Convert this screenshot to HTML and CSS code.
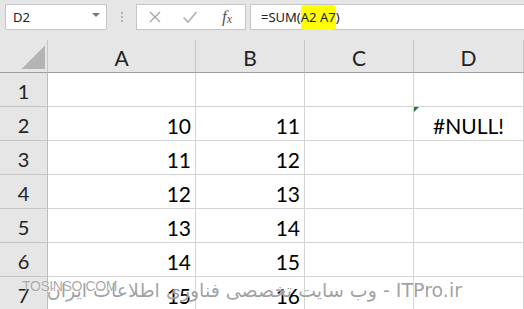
FILE: index.html
```html
<!DOCTYPE html>
<html lang="en">
<head>
    <meta charset="UTF-8">
    <title>SUM #NULL!</title>
    <link rel="stylesheet" href="styles.css">
</head>
<body>
    <div class="toolbar">
        <div class="name-box">
            <span>D2</span>
            <span class="drop"></span>
        </div>
        <div class="grip"><i></i><i></i><i></i></div>
        <div class="fx-buttons">
            <svg class="btn" width="14" height="14" viewBox="0 0 14 14">
                <path d="M2 2 L12 12 M12 2 L2 12" stroke="#a8a8a8" stroke-width="1.4" fill="none"/>
            </svg>
            <svg class="btn" width="16" height="14" viewBox="0 0 16 14">
                <path d="M1.5 7.5 L6 12 L14.5 2" stroke="#b0b0b0" stroke-width="1.6" fill="none"/>
            </svg>
            <span class="fx">f<sub>x</sub></span>
        </div>
        <div class="formula">=SUM(<span class="hl">A2 A7</span>)</div>
    </div>

    <div class="sheet">
        <div class="corner"></div>
        <div class="col-head">A</div>
        <div class="col-head">B</div>
        <div class="col-head">C</div>
        <div class="col-head">D</div>

        <div class="row-head">1</div>
        <div class="cell"></div>
        <div class="cell"></div>
        <div class="cell"></div>
        <div class="cell"></div>

        <div class="row-head">2</div>
        <div class="cell num">10</div>
        <div class="cell num">11</div>
        <div class="cell"></div>
        <div class="cell error">#NULL!</div>

        <div class="row-head">3</div>
        <div class="cell num">11</div>
        <div class="cell num">12</div>
        <div class="cell"></div>
        <div class="cell"></div>

        <div class="row-head">4</div>
        <div class="cell num">12</div>
        <div class="cell num">13</div>
        <div class="cell"></div>
        <div class="cell"></div>

        <div class="row-head">5</div>
        <div class="cell num">13</div>
        <div class="cell num">14</div>
        <div class="cell"></div>
        <div class="cell"></div>

        <div class="row-head">6</div>
        <div class="cell num">14</div>
        <div class="cell num">15</div>
        <div class="cell"></div>
        <div class="cell"></div>

        <div class="row-head">7</div>
        <div class="cell num">15</div>
        <div class="cell num">16</div>
        <div class="cell"></div>
        <div class="cell"></div>
    </div>

    <div class="mark-site">TOSINSO.COM</div>
    <div class="mark-itpro" dir="rtl">ITPro.ir - وب سایت تخصصی فناوری اطلاعات ایران</div>
</body>
</html>
```

FILE: styles.css
```css
body {
    margin: 0;
    background: #fff;
    font-family: Lato, "Open Sans", sans-serif;
    color: #000;
    overflow: hidden;
    position: relative;
    height: 309px;
}

.toolbar {
    display: flex;
    align-items: flex-start;
    height: 40px;
    padding: 4px 0 0 5px;
    box-sizing: border-box;
    background: #e6e6e6;
}

.name-box {
    display: flex;
    align-items: center;
    justify-content: space-between;
    width: 102px;
    height: 26px;
    box-sizing: border-box;
    padding: 0 6px 0 7px;
    background: #fff;
    border: 1px solid #c6c6c6;
    font-family: "Noto Sans", sans-serif;
    font-size: 13px;
    color: #222;
}

.drop {
    width: 0;
    height: 0;
    border-left: 4px solid transparent;
    border-right: 4px solid transparent;
    border-top: 4px solid #777;
    margin-top: -4px;
}

.grip {
    display: flex;
    flex-direction: column;
    gap: 2px;
    margin: 8px 13px 0 14px;
}

.grip i {
    display: block;
    width: 2px;
    height: 2px;
    background: #b4b4b4;
}

.fx-buttons {
    display: flex;
    align-items: center;
    width: 110px;
    height: 26px;
    box-sizing: border-box;
    padding-left: 11px;
    background: #fff;
    border: 1px solid #c6c6c6;
}

.fx-buttons .btn + .btn {
    margin-left: 20px;
}

.fx {
    margin-left: 24px;
    font-family: "Liberation Serif", serif;
    font-style: italic;
    font-size: 17px;
    color: #555;
}

.fx sub {
    font-size: 12px;
    vertical-align: -1px;
}

.formula {
    flex: 1;
    display: flex;
    align-items: center;
    height: 26px;
    box-sizing: border-box;
    margin-left: 4px;
    padding-left: 10px;
    background: #fff;
    border: 1px solid #c6c6c6;
    border-right: none;
    font-family: "Noto Sans", sans-serif;
    font-size: 13px;
    color: #222;
}

.hl {
    background: #ffff00;
    padding: 3px 0 4px;
    border-radius: 3px;
}

.sheet {
    display: grid;
    grid-template-columns: 48px 148px 109px 109px 110px;
    grid-template-rows: 33px repeat(7, 34px);
}

.sheet > div {
    box-sizing: border-box;
    border-right: 1px solid #d4d4d4;
    border-bottom: 1px solid #d4d4d4;
    display: flex;
    align-items: center;
    font-size: 21px;
}

.corner {
    background: #e6e6e6 linear-gradient(to top left, #b4b4b4 50%, transparent 50%) no-repeat right 2px bottom 3px / 24px 24px;
}

.sheet > .corner,
.sheet > .col-head {
    border-right-color: #c6c6c6;
    border-bottom-color: #9e9e9e;
}

.col-head {
    justify-content: center;
    background: #e6e6e6;
    color: #222;
    font-size: 20px;
    padding-top: 2px;
}

.sheet > .row-head {
    justify-content: center;
    background: #e6e6e6;
    border-right-color: #bcbcbc;
    border-bottom-color: #c6c6c6;
    color: #222;
    font-size: 20px;
    padding-top: 3px;
}

.num {
    justify-content: flex-end;
    padding: 3px 4px 0 0;
}

.error {
    position: relative;
    justify-content: center;
    padding-top: 3px;
}

.error::before {
    content: "";
    position: absolute;
    top: 0;
    left: 0;
    border-top: 5px solid #1e7b33;
    border-right: 5px solid transparent;
}

.mark-site {
    position: absolute;
    left: 22px;
    top: 278px;
    font-family: "Liberation Sans", sans-serif;
    font-size: 14px;
    letter-spacing: -0.4px;
    color: rgba(140, 140, 140, 0.75);
    text-shadow: 0 0 1px #fff;
}

.mark-itpro {
    position: absolute;
    right: 62px;
    top: 279px;
    font-family: "DejaVu Sans", sans-serif;
    font-size: 19px;
    color: rgba(120, 120, 120, 0.7);
    text-shadow: 0 0 1px #fff;
    white-space: nowrap;
}
```
